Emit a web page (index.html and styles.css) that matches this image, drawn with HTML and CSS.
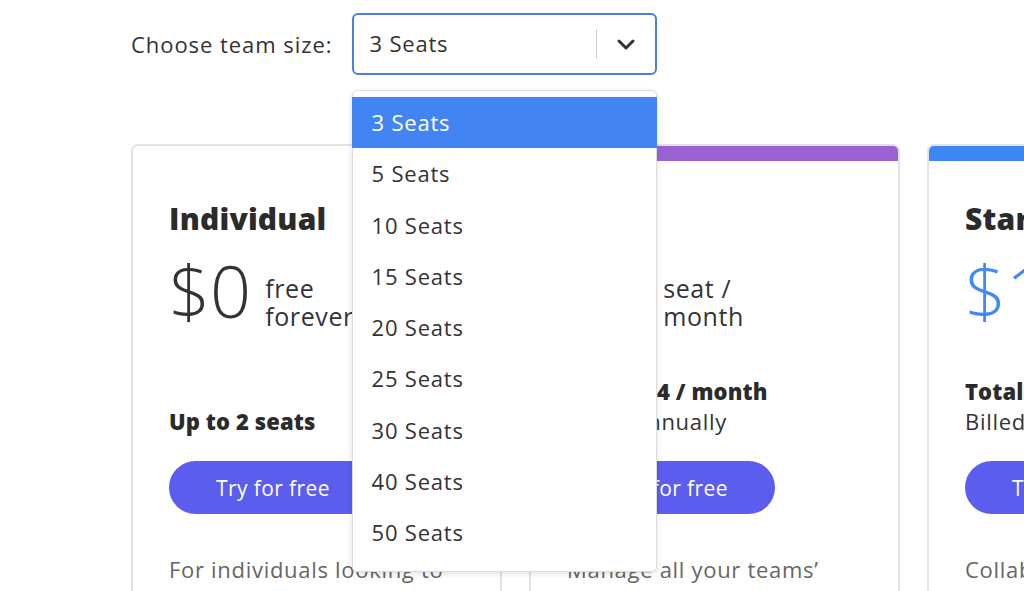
FILE: index.html
```html
<!DOCTYPE html>
<html>
<head>
<meta charset="utf-8">
<link rel="stylesheet" href="styles.css">
</head>
<body>
<div class="page">
  <div class="top">
    <span class="label">Choose team size:</span>
    <div class="select">
      <div class="control">
        <span class="value">3 Seats</span>
        <span class="sep"></span>
        <span class="chev"><svg width="20" height="13" viewBox="0 0 20 13"><path d="M3 3 L10 10 L17 3" fill="none" stroke="#333" stroke-width="3" stroke-linecap="round" stroke-linejoin="round"/></svg></span>
      </div>
      <ul class="menu">
        <li class="opt active">3 Seats</li>
        <li class="opt">5 Seats</li>
        <li class="opt">10 Seats</li>
        <li class="opt">15 Seats</li>
        <li class="opt">20 Seats</li>
        <li class="opt">25 Seats</li>
        <li class="opt">30 Seats</li>
        <li class="opt">40 Seats</li>
        <li class="opt">50 Seats</li>
      </ul>
    </div>
  </div>
  <div class="cards">
    <div class="card">
      <div class="bar"></div>
      <div class="body">
        <h2 class="title">Individual</h2>
        <div class="price">
          <span class="amount">$0</span>
          <span class="per">free<br>forever</span>
        </div>
        <div class="total">
          <div class="bold">Up to 2 seats</div>
        </div>
        <button class="btn">Try for free</button>
        <p class="desc">For individuals looking to</p>
      </div>
    </div>
    <div class="card">
      <div class="bar purple"></div>
      <div class="body">
        <h2 class="title">Team</h2>
        <div class="price">
          <span class="amount">$8</span>
          <span class="per">seat /<br>month</span>
        </div>
        <div class="total">
          <div class="bold">Total $24 / month</div>
          <div class="billed">Billed annually</div>
        </div>
        <button class="btn">Try for free</button>
        <p class="desc">Manage all your teams’</p>
      </div>
    </div>
    <div class="card">
      <div class="bar blue"></div>
      <div class="body">
        <h2 class="title">Starter</h2>
        <div class="price">
          <span class="amount blue-text">$12</span>
          <span class="per">seat /<br>month</span>
        </div>
        <div class="total">
          <div class="bold">Total $36 / month</div>
          <div class="billed">Billed annually</div>
        </div>
        <button class="btn">Try for free</button>
        <p class="desc">Collaborate with</p>
      </div>
    </div>
  </div>
</div>
</body>
</html>
```

FILE: styles.css
```css
html, body {
  margin: 0;
  padding: 0;
  background: #fff;
  overflow: hidden;
}
body {
  font-family: "Open Sans", "Liberation Sans", sans-serif;
  color: #333;
  width: 1024px;
  height: 591px;
}
.page {
  width: 1024px;
  height: 591px;
  overflow: hidden;
}
.top {
  display: flex;
  align-items: center;
  padding: 13px 0 0 131px;
  height: 62px;
}
.label {
  font-size: 22px;
  letter-spacing: 0.95px;
  color: #333;
  margin-right: 19px;
  white-space: nowrap;
}
.select {
  position: relative;
  width: 305px;
  height: 62px;
  z-index: 5;
}
.control {
  box-sizing: border-box;
  height: 62px;
  border: 2px solid #4a80dc;
  border-radius: 6px;
  display: flex;
  align-items: center;
  padding-left: 16px;
  background: #fff;
}
.value {
  flex: 1;
  font-size: 22px;
  letter-spacing: 0.8px;
  color: #333;
  margin-top: -2px;
}
.sep {
  width: 1px;
  height: 30px;
  background: #cfcfcf;
}
.chev {
  width: 58px;
  display: flex;
  justify-content: center;
  align-items: center;
  padding-top: 1px;
}
.menu {
  position: absolute;
  left: 0;
  top: 77px;
  width: 305px;
  box-sizing: border-box;
  margin: 0;
  padding: 6px 0 12px;
  list-style: none;
  background: #fff;
  border: 1px solid #dcdcdc;
  border-radius: 5px;
  box-shadow: 0 2px 6px rgba(0,0,0,0.12);
}
.opt {
  height: 51.3px;
  line-height: 51.3px;
  padding-left: 19px;
  font-size: 22px;
  letter-spacing: 0.8px;
  color: #333;
}
.opt.active {
  background: #4384f3;
  color: #fff;
  margin: 0 -1px;
  padding-left: 20px;
}
.cards {
  display: flex;
  gap: 27px;
  margin-top: 69px;
  padding-left: 131px;
}
.card {
  flex: 0 0 371px;
  box-sizing: border-box;
  border: 2px solid #e2e2e2;
  border-radius: 7px;
  overflow: hidden;
  height: 480px;
}
.bar {
  height: 15px;
}
.bar.purple { background: #9a62d2; }
.bar.blue { background: #3d87f2; }
.body {
  padding: 0 36px;
}
.title {
  margin: 37px 0 0;
  font-size: 30px;
  font-weight: 800;
  line-height: 42px;
  letter-spacing: 0.2px;
  color: #2b2b2b;
}
.price {
  display: flex;
  align-items: flex-end;
  margin-top: 13px;
  height: 74px;
}
.amount {
  font-size: 72px;
  font-weight: 300;
  line-height: 74px;
  color: #333;
  margin-right: 14px;
}
.blue-text { color: #4289f2; }
.per {
  font-size: 25px;
  line-height: 28px;
  letter-spacing: 0.6px;
  color: #333;
  margin-bottom: -3px;
}
.total {
  margin-top: 49px;
  height: 60px;
  display: flex;
  flex-direction: column;
  justify-content: flex-end;
  font-size: 22px;
  line-height: 30px;
}
.bold {
  font-weight: 800;
  color: #2b2b2b;
  letter-spacing: 0.1px;
}
.billed {
  color: #333;
  letter-spacing: 0.7px;
}
.btn {
  display: block;
  margin-top: 25px;
  width: 208px;
  height: 53px;
  border: none;
  border-radius: 27px;
  background: #5b5dee;
  color: #fff;
  font-family: inherit;
  font-size: 21px;
  letter-spacing: 0.4px;
  padding: 0;
}
.desc {
  margin: 41px 0 0;
  font-size: 22px;
  letter-spacing: 0.7px;
  line-height: 28px;
  color: #666;
  white-space: nowrap;
}
```
